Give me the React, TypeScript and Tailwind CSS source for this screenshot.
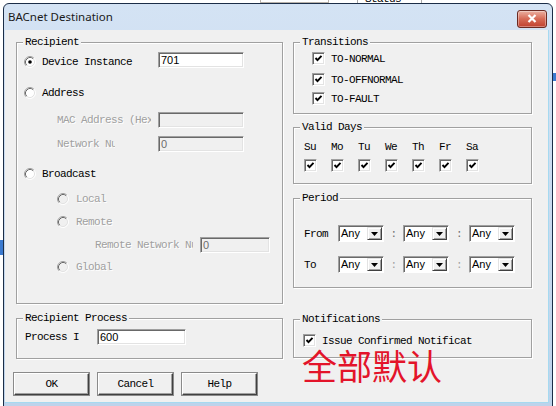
import React from "react";

const mono = "font-['Liberation_Mono',monospace] text-[11px] leading-[12px] tracking-[-0.6px] whitespace-nowrap";
const dis = "text-[#a0a0a0] [text-shadow:1px_1px_0_#fff]";

function Radio({ checked, disabled }: { checked?: boolean; disabled?: boolean }) {
  return (
    <svg width="12" height="12" viewBox="0 0 12 12" className="shrink-0">
      <circle cx="6" cy="6" r="5" fill={disabled ? "#f0f0f0" : "#ffffff"} />
      <path d="M2.11 9.89 A5.5 5.5 0 0 1 9.89 2.11" stroke="#a0a0a0" fill="none" />
      <path d="M9.89 2.11 A5.5 5.5 0 0 1 2.11 9.89" stroke="#ffffff" fill="none" />
      <path d="M2.82 9.18 A4.5 4.5 0 0 1 9.18 2.82" stroke="#696969" fill="none" />
      <path d="M9.18 2.82 A4.5 4.5 0 0 1 2.82 9.18" stroke="#e3e3e3" fill="none" />
      {checked && <circle cx="6" cy="6" r="1.8" fill="#000" />}
    </svg>
  );
}

function Check() {
  return (
    <span className="w-[13px] h-[13px] shrink-0 border border-t-[#a0a0a0] border-l-[#a0a0a0] border-b-white border-r-white shadow-[inset_1px_1px_0_#696969,inset_-1px_-1px_0_#e3e3e3] bg-white flex items-center justify-center">
      <svg width="9" height="9" viewBox="0 0 9 9">
        <path d="M1.5 4 L3.5 6.2 L7.5 1.8" stroke="#000" strokeWidth="1.9" fill="none" />
      </svg>
    </span>
  );
}

function Field({ className, value, disabled }: { className: string; value: string; disabled?: boolean }) {
  return (
    <div
      className={`${className} h-[16px] shrink-0 border border-t-[#a0a0a0] border-l-[#a0a0a0] border-b-white border-r-white shadow-[inset_1px_1px_0_#696969,inset_-1px_-1px_0_#e3e3e3] ${
        disabled ? "bg-[#f0f0f0] text-[#6d6d6d]" : "bg-white text-black"
      } font-['Liberation_Sans',sans-serif] text-[11px] leading-[14px] pl-[2px]`}
    >
      {value}
    </div>
  );
}

function Combo() {
  return (
    <div className="w-[46px] h-[17px] shrink-0 flex border border-t-[#a0a0a0] border-l-[#a0a0a0] border-b-white border-r-white shadow-[inset_1px_1px_0_#696969] bg-white">
      <span className="flex-1 pl-[2px] pt-[1px] font-['Liberation_Sans',sans-serif] text-[11px] leading-[13px] text-black">Any</span>
      <span className="w-[15px] h-[13px] mt-[1px] mr-[1px] bg-[#f0f0f0] border border-t-[#e3e3e3] border-l-[#e3e3e3] border-b-[#404040] border-r-[#404040] shadow-[inset_1px_1px_0_#fff,inset_-1px_-1px_0_#a0a0a0] flex items-center justify-center">
        <svg width="7" height="4" viewBox="0 0 7 4">
          <path d="M0 0 H7 L3.5 4 Z" fill="#000" />
        </svg>
      </span>
    </div>
  );
}

function Group({ title, className, children }: { title: string; className: string; children?: React.ReactNode }) {
  return (
    <div className={`${className} relative border border-[#a0a0a0] shadow-[inset_1px_1px_0_#fff,1px_1px_0_#fff]`}>
      <span className={`${mono} absolute -top-[7px] left-[6px] px-[2px] bg-[#f0f0f0] text-black`}>{title}</span>
      {children}
    </div>
  );
}

function Btn({ label }: { label: string }) {
  return (
    <div className={`${mono} w-[75px] h-[22px] flex items-center justify-center bg-[#f0f0f0] border border-t-white border-l-white border-b-[#404040] border-r-[#404040] shadow-[inset_-1px_-1px_0_#a0a0a0,0_0_0_1px_#8a8a8a] text-black`}>
      {label}
    </div>
  );
}

export default function App() {
  const days = ["Su", "Mo", "Tu", "We", "Th", "Fr", "Sa"];
  return (
    <div className="relative w-[556px] h-[406px] overflow-hidden bg-white">
      {/* background window fragments */}
      <div className="absolute left-[260px] top-0 w-[69px] h-[3px] border-x border-b border-[#b9b2aa]" />
      <div className="absolute left-[357px] top-0 w-[65px] h-[4px] border-x border-[#a9a9a9]" />
      <div className={`${mono} absolute left-[365px] -top-[7px] text-black`}>Status</div>
      <div className="absolute left-[553px] top-[73px] w-[3px] h-[8px] bg-[#3b7ad0]" />
      <div className="absolute left-0 top-[240px] w-[3px] h-[15px] bg-[#3b7ad0]" />

      {/* dialog window */}
      <div className="absolute left-[3px] top-[3px] w-[550px] h-[404px] rounded-t-[6px] border border-[#1b2d47] bg-gradient-to-b from-[#d4e3f4] to-[#bdd3eb] flex flex-col">
        <div className="h-[26px] shrink-0 flex items-center justify-between pl-[4px] pr-[5px]">
          <span className="font-['Noto_Sans',sans-serif] text-[11.5px] text-[#1a1a1a] leading-[16px]">BACnet Destination</span>
          <div className="mt-[3px] w-[30px] h-[18px] rounded-[3px] border border-[#6b2a22] bg-gradient-to-b from-[#eab0a2] via-[#d66a56] to-[#c0402e] flex items-center justify-center shadow-[inset_0_0_0_1px_rgba(255,255,255,0.35)]">
            <svg width="10" height="9" viewBox="0 0 10 9">
              <path d="M1.5 1 L8.5 8 M8.5 1 L1.5 8" stroke="#fff" strokeWidth="2.2" />
            </svg>
          </div>
        </div>

        <div className="ml-[1px] mr-[3px] h-[373px] shrink-0 bg-[#f0f0f0] border-r border-b border-[#a6d9f0] flex gap-[10px] pl-[11px] pt-[12px]">
          {/* left column */}
          <div className="w-[267px] flex flex-col">
            <Group title="Recipient" className="h-[262px]">
              <div className="flex flex-col pl-[7px]">
                <div className="mt-[9px] h-[16px] flex items-center">
                  <span className="mt-[4px] mr-[6px]"><Radio checked /></span>
                  <span className={`${mono} mt-[4px] w-[116px] text-black`}>Device Instance</span>
                  <Field className="w-[86px]" value="701" />
                </div>
                <div className="mt-[17px] h-[16px] flex items-center">
                  <span className="mr-[6px]"><Radio /></span>
                  <span className={`${mono} text-black`}>Address</span>
                </div>
                <div className="mt-[11px] h-[16px] flex items-center ml-[33px]">
                  <span className={`${mono} ${dis} w-[94px] overflow-hidden mr-[7px]`}>MAC Address (Hex)</span>
                  <Field className="w-[86px]" value="" disabled />
                </div>
                <div className="mt-[8px] h-[16px] flex items-center ml-[33px]">
                  <span className={`${mono} ${dis} w-[58px] overflow-hidden mr-[43px]`}>Network Number</span>
                  <Field className="w-[86px]" value="0" disabled />
                </div>
                <div className="mt-[14px] h-[16px] flex items-center">
                  <span className="mr-[6px]"><Radio /></span>
                  <span className={`${mono} text-black`}>Broadcast</span>
                </div>
                <div className="mt-[9px] h-[16px] flex items-center ml-[33px]">
                  <span className="mr-[7px]"><Radio disabled /></span>
                  <span className={`${mono} ${dis}`}>Local</span>
                </div>
                <div className="mt-[7px] h-[16px] flex items-center ml-[33px]">
                  <span className="mr-[7px]"><Radio disabled /></span>
                  <span className={`${mono} ${dis}`}>Remote</span>
                </div>
                <div className="mt-[7px] h-[16px] flex items-center ml-[71px]">
                  <span className={`${mono} ${dis} w-[98px] overflow-hidden mr-[7px]`}>Remote Network Number</span>
                  <Field className="w-[70px]" value="0" disabled />
                </div>
                <div className="mt-[6px] h-[16px] flex items-center ml-[33px]">
                  <span className="mr-[7px]"><Radio disabled /></span>
                  <span className={`${mono} ${dis}`}>Global</span>
                </div>
              </div>
            </Group>

            <Group title="Recipient Process" className="mt-[14px] h-[41px]">
              <div className="mt-[10px] h-[16px] flex items-center pl-[8px]">
                <span className={`${mono} w-[54px] overflow-hidden mr-[18px] text-black`}>Process ID</span>
                <Field className="w-[89px]" value="600" />
              </div>
            </Group>

            <div className="mt-[14px] -ml-[2px] flex gap-[9px]">
              <Btn label="OK" />
              <Btn label="Cancel" />
              <Btn label="Help" />
            </div>
          </div>

          {/* right column */}
          <div className="w-[239px] flex flex-col">
            <Group title="Transitions" className="h-[72px]">
              <div className="flex flex-col pl-[18px]">
                <div className="mt-[9px] h-[13px] flex items-center">
                  <Check />
                  <span className={`${mono} ml-[6px] text-black`}>TO-NORMAL</span>
                </div>
                <div className="mt-[8px] h-[13px] flex items-center">
                  <Check />
                  <span className={`${mono} ml-[6px] text-black`}>TO-OFFNORMAL</span>
                </div>
                <div className="mt-[6px] h-[13px] flex items-center">
                  <Check />
                  <span className={`${mono} ml-[6px] text-black`}>TO-FAULT</span>
                </div>
              </div>
            </Group>

            <Group title="Valid Days" className="mt-[13px] h-[57px]">
              <div className="flex pl-[10px]">
                {days.map((d) => (
                  <div key={d} className="w-[27px] flex flex-col">
                    <span className={`${mono} mt-[13px] text-black`}>{d}</span>
                    <span className="mt-[6px]"><Check /></span>
                  </div>
                ))}
              </div>
            </Group>

            <Group title="Period" className="mt-[14px] h-[90px]">
              <div className="flex flex-col pl-[10px]">
                <div className="mt-[26px] h-[17px] flex items-center">
                  <span className={`${mono} w-[34px] text-black`}>From</span>
                  <Combo />
                  <span className={`${mono} w-[19px] text-center text-[#707070]`}>:</span>
                  <Combo />
                  <span className={`${mono} w-[20px] text-center text-[#707070]`}>:</span>
                  <Combo />
                </div>
                <div className="mt-[14px] h-[17px] flex items-center">
                  <span className={`${mono} w-[34px] text-black`}>To</span>
                  <Combo />
                  <span className={`${mono} w-[19px] text-center text-[#a0a0a0]`}>:</span>
                  <Combo />
                  <span className={`${mono} w-[20px] text-center text-[#a0a0a0]`}>:</span>
                  <Combo />
                </div>
              </div>
            </Group>

            <Group title="Notifications" className="mt-[31px] h-[39px]">
              <div className="mt-[14px] h-[13px] flex items-center pl-[9px]">
                <Check />
                <span className={`${mono} ml-[6px] w-[150px] overflow-hidden text-black`}>Issue Confirmed Notifications</span>
              </div>
            </Group>
          </div>
        </div>
      </div>

      {/* red annotation */}
      <div className="absolute left-[302px] top-[347px] font-['Noto_Sans_CJK_SC',sans-serif] text-[35px] leading-[35px] text-[#e3142a] whitespace-nowrap">
        全部默认
      </div>
    </div>
  );
}
